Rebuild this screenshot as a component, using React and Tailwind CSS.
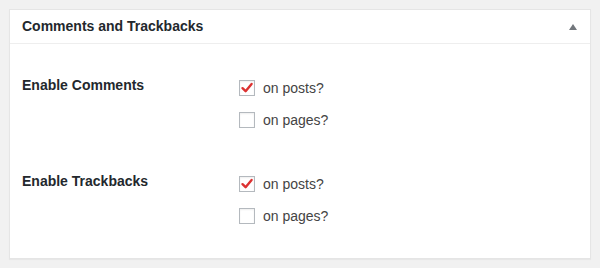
import React, { useState } from 'react';

const Checkbox = ({ checked, onChange, label }) => (
  <label className="flex items-center h-8 cursor-pointer select-none">
    <span
      onClick={onChange}
      className="w-4 h-4 border border-[#b4b9be] bg-white shadow-[inset_0_1px_2px_rgba(0,0,0,0.07)] flex items-center justify-center mr-2"
    >
      {checked && (
        <svg width="14" height="14" viewBox="0 0 14 14">
          <path d="M2.5 7.2 L5.6 10.2 L11.6 3" fill="none" stroke="#dc3232" strokeWidth="2.4" strokeLinecap="round" strokeLinejoin="round" />
        </svg>
      )}
    </span>
    <span className="text-[14px] text-[#444]">{label}</span>
  </label>
);

const App = () => {
  const [opts, setOpts] = useState({ cPosts: true, cPages: false, tPosts: true, tPages: false });
  const toggle = (k) => setOpts((o) => ({ ...o, [k]: !o[k] }));

  const rows = [
    { title: 'Enable Comments', keys: ['cPosts', 'cPages'] },
    { title: 'Enable Trackbacks', keys: ['tPosts', 'tPages'] },
  ];

  return (
    <div className="w-[600px] h-[268px] bg-[#f1f1f1] pt-[9px] px-[9px]" style={{ fontFamily: '"Liberation Sans", Arial, sans-serif' }}>
      <div className="bg-white border border-[#e5e5e5] shadow-[0_1px_1px_rgba(0,0,0,0.04)] h-[250px] flex flex-col">
        {/* Header */}
        <div className="h-[34px] px-3 flex items-center justify-between border-b border-[#eee]">
          <h2 className="text-[14px] font-bold text-[#23282d]">Comments and Trackbacks</h2>
          <span className="w-0 h-0 border-l-[4px] border-r-[4px] border-b-[6px] border-l-transparent border-r-transparent border-b-[#72777c] mr-[1px]" />
        </div>

        {/* Settings */}
        <div className="px-3 pt-[28px] flex flex-col gap-8">
          {rows.map((r) => (
            <div key={r.title} className="flex">
              <div className="w-[217px] pt-[3px] text-[14px] leading-5 font-bold text-[#23282d]">{r.title}</div>
              <div className="flex flex-col">
                <Checkbox checked={opts[r.keys[0]]} onChange={() => toggle(r.keys[0])} label="on posts?" />
                <Checkbox checked={opts[r.keys[1]]} onChange={() => toggle(r.keys[1])} label="on pages?" />
              </div>
            </div>
          ))}
        </div>
      </div>
    </div>
  );
};

export default App;
